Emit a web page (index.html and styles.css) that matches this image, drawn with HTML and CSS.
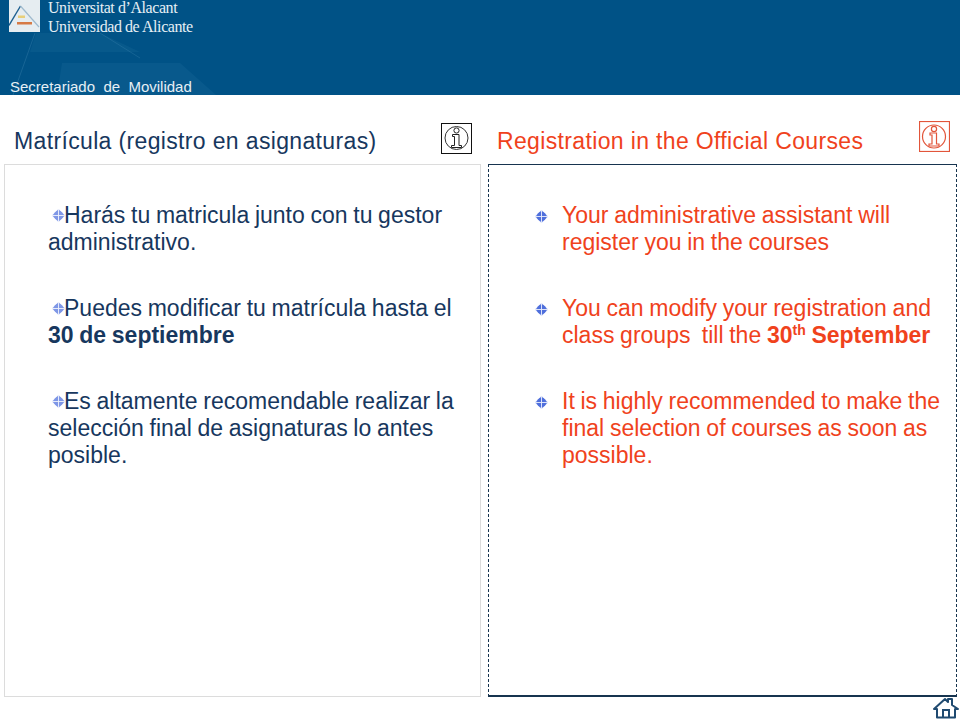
FILE: index.html
```html
<!DOCTYPE html>
<html lang="es">
<head>
<meta charset="utf-8">
<title>Matrícula</title>
<link rel="stylesheet" href="styles.css">
</head>
<body>
<header class="banner">
  <svg class="banner-art" width="960" height="95" viewBox="0 0 960 95" aria-hidden="true">
    <polygon points="30,52 36,33 100,33 140,52" fill="#1a6a9c" opacity=".28"/>
    <polygon points="57,95 62,63 180,63 216,95" fill="#1a6a9c" opacity=".3"/>
    <line x1="35" y1="33" x2="13" y2="95" stroke="#3a82ad" opacity=".4"/>
    <line x1="100" y1="33" x2="140" y2="58" stroke="#3a82ad" opacity=".35"/>
  </svg>
  <div class="brand">
    <svg class="logo" width="31" height="32" viewBox="0 0 31 32" aria-hidden="true">
      <rect width="31" height="32" fill="#e6edf1"/>
      <path d="M0 25.500 11.500 6" fill="none" stroke="#1c5f8f" stroke-width="1.400"/>
      <path d="M11.500 6 30 27" fill="none" stroke="#9fbace" stroke-width="1.200"/>
      <rect x="9" y="15.500" width="7" height="2.500" fill="#e8cf7a"/>
      <rect x="8" y="22" width="15" height="2.500" fill="#d67a45"/>
    </svg>
    <div class="brand-names">
      <div>Universitat d’Alacant</div>
      <div>Universidad de Alicante</div>
    </div>
  </div>
  <div class="dept">Secretariado&nbsp; de&nbsp; Movilidad</div>
</header>
<main class="columns">
  <section class="col col-es">
    <div class="col-head">
      <h2 class="title">Matrícula (registro en asignaturas)</h2>
      <svg class="info info-es" width="31" height="31" viewBox="0 0 31 31" aria-hidden="true">
        <rect x=".5" y=".5" width="30" height="30" fill="#fff" stroke="#111"/>
        <circle cx="15.500" cy="15" r="11.500" fill="none" stroke="#333"/>
        <circle cx="15.500" cy="7.500" r="2.600" fill="none" stroke="#222"/>
        <path d="M11.500 11.500H18V22.500H20.500V24.500H10.500V22.500H13.500V13.500H11.500Z" fill="none" stroke="#222"/>
      </svg>
    </div>
    <div class="panel panel-es">
      <p class="item"><svg class="bullet" width="13" height="13" viewBox="0 0 14 14" aria-hidden="true"><path d="M7 0 14 7 7 14 0 7Z" fill="#8ea3ea"/><circle cx="7" cy="7" r="5" fill="#7f97e6"/><path d="M7 0V14M0 7H14" stroke="#eef1fc" stroke-width="1"/></svg>Harás tu matricula junto con tu gestor administrativo.</p>
      <p class="item"><svg class="bullet" width="13" height="13" viewBox="0 0 14 14" aria-hidden="true"><path d="M7 0 14 7 7 14 0 7Z" fill="#8ea3ea"/><circle cx="7" cy="7" r="5" fill="#7f97e6"/><path d="M7 0V14M0 7H14" stroke="#eef1fc" stroke-width="1"/></svg>Puedes modificar tu matrícula hasta el <b>30 de septiembre</b></p>
      <p class="item"><svg class="bullet" width="13" height="13" viewBox="0 0 14 14" aria-hidden="true"><path d="M7 0 14 7 7 14 0 7Z" fill="#8ea3ea"/><circle cx="7" cy="7" r="5" fill="#7f97e6"/><path d="M7 0V14M0 7H14" stroke="#eef1fc" stroke-width="1"/></svg>Es altamente recomendable realizar la selección final de asignaturas lo antes posible.</p>
    </div>
  </section>
  <section class="col col-en">
    <div class="col-head">
      <h2 class="title">Registration in the Official Courses</h2>
      <svg class="info info-en" width="31" height="31" viewBox="0 0 31 31" aria-hidden="true">
        <rect x=".5" y=".5" width="30" height="30" fill="#fff" stroke="#e2553a" stroke-width="1.200"/>
        <circle cx="15" cy="15.500" r="11.500" fill="none" stroke="#e2553a" stroke-width="1.200"/>
        <circle cx="15" cy="8" r="2.600" fill="none" stroke="#e2553a" stroke-width="1.200"/>
        <path d="M11 12H17.500V23H20V25H10V23H13V14H11Z" fill="none" stroke="#e2553a" stroke-width="1.200"/>
      </svg>
    </div>
    <div class="panel panel-en">
      <div class="row"><svg class="bullet-en" width="13" height="13" viewBox="0 0 14 14" aria-hidden="true"><path d="M7 0 14 7 7 14 0 7Z" fill="#7f97e6"/><circle cx="7" cy="7" r="5" fill="#4f6fdc"/><path d="M7 0V14M0 7H14" stroke="#e7ecfb" stroke-width="1"/></svg><p class="text">Your administrative assistant will register you in the courses</p></div>
      <div class="row"><svg class="bullet-en" width="13" height="13" viewBox="0 0 14 14" aria-hidden="true"><path d="M7 0 14 7 7 14 0 7Z" fill="#7f97e6"/><circle cx="7" cy="7" r="5" fill="#4f6fdc"/><path d="M7 0V14M0 7H14" stroke="#e7ecfb" stroke-width="1"/></svg><p class="text">You can modify your registration and class groups&nbsp; till the <b>30<sup>th</sup> September</b></p></div>
      <div class="row"><svg class="bullet-en" width="13" height="13" viewBox="0 0 14 14" aria-hidden="true"><path d="M7 0 14 7 7 14 0 7Z" fill="#7f97e6"/><circle cx="7" cy="7" r="5" fill="#4f6fdc"/><path d="M7 0V14M0 7H14" stroke="#e7ecfb" stroke-width="1"/></svg><p class="text">It is highly recommended to make the final selection of courses as soon as possible.</p></div>
    </div>
  </section>
</main>
<svg class="home" width="26" height="22" viewBox="0 0 26 22" aria-hidden="true">
  <path d="M1 12 12 2 15 5V2H19V8L25 12H22V20.500H4V12Z" fill="#fff" stroke="#1f4a70" stroke-width="2" stroke-linejoin="round"/>
  <path d="M10 20V13H16V20" fill="none" stroke="#1f4a70" stroke-width="2"/>
</svg>
</body>
</html>
```
FILE: styles.css
```css
* { box-sizing: border-box; }
html, body { margin: 0; padding: 0; }
body {
  position: relative;
  width: 960px;
  height: 720px;
  overflow: hidden;
  background: #fff;
  font-family: "Liberation Sans", Arial, sans-serif;
}
.banner {
  position: relative;
  height: 95px;
  background: #005286;
  color: #e6eff5;
  padding: 0 0 0 9px;
  display: flex;
  flex-direction: column;
  justify-content: space-between;
}
.banner-art { position: absolute; left: 0; top: 0; }
.brand { position: relative; display: flex; gap: 8px; height: 32px; }
.logo { display: block; }
.brand-names {
  font-family: "Liberation Serif", serif;
  font-size: 16px;
  line-height: 19px;
  letter-spacing: -.43px;
  margin-top: -2px;
}
.dept {
  position: relative;
  font-size: 15px;
  line-height: 17px;
  margin: 0 0 0 1px;
  padding-bottom: 0;
}
.columns {
  display: grid;
  grid-template-columns: 477px 469px;
  gap: 7px;
  padding-left: 4px;
}
.col-head {
  position: relative;
  height: 69px;
}
.title {
  margin: 0;
  font-weight: 400;
  font-size: 23px;
  line-height: 27px;
  padding-top: 33px;
  letter-spacing: .35px;
}
.col-es .title { color: #17375e; padding-left: 10px; }
.col-en .title { color: #f0421c; padding-left: 9px; }
.info { position: absolute; display: block; }
.info-es { left: 437px; top: 28px; }
.info-en { left: 431px; top: 26px; }
.panel { height: 533px; }
.panel-es {
  border: 1px solid #dcdcdc;
  padding: 37px 24px 0 43px;
  color: #17375e;
}
.panel-en {
  border-top: 1px solid #17344f;
  border-bottom: 2px solid #17344f;
  border-left: 1px dashed #17344f;
  border-right: 1px dashed #17344f;
  padding: 37px 0 0 46px;
  color: #f0421c;
}
.item, .text {
  margin: 0 0 39px;
  font-size: 23px;
  line-height: 27px;
  word-spacing: -.7px;
}
.bullet { vertical-align: 1px; margin: 0 -1px 0 4px; }
.row { display: flex; }
.bullet-en { flex: none; margin: 8px 14px 0 0; }
.text { width: 385px; }
sup { font-size: 14px; line-height: 0; vertical-align: 8px; }
.home { position: absolute; left: 933px; top: 697px; }
```
